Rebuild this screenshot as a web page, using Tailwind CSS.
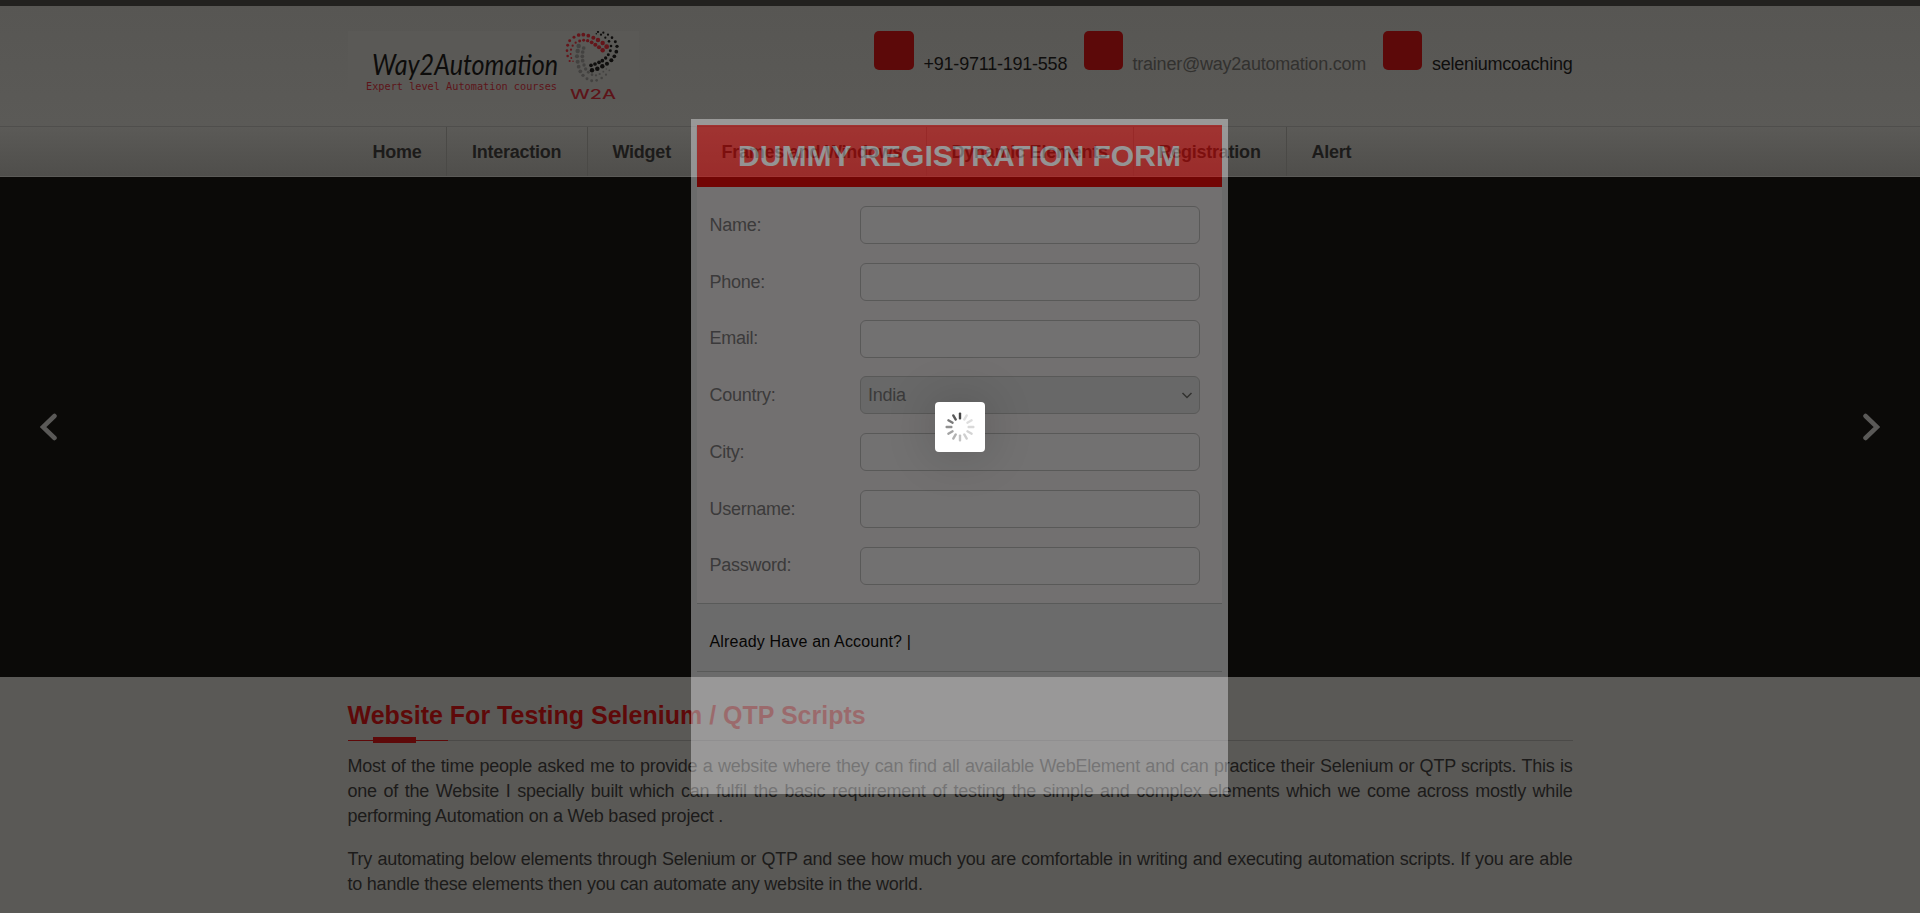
<!DOCTYPE html>
<html lang="en">
<head>
<meta charset="utf-8">
<title>Way2Automation</title>
<script src="https://cdn.jsdelivr.net/npm/@tailwindcss/browser@4"></script>
</head>
<body class="relative h-[913px] w-[1920px] overflow-hidden bg-[#5a5956] font-['Liberation_Sans',sans-serif] text-lg tracking-[-0.225px] text-[#1c1b1a]">
<header class="h-[126px] border-t-6 border-[#22211f] bg-linear-to-b from-[#575653] to-[#5b5a57]">
  <div class="mx-auto flex w-[1225px] justify-between pt-[25px]">
    <svg class="h-[70px] w-[291px] bg-[#5a5956]" viewBox="0 0 291 70">
      <text x="24" y="44" font-family="Lato" font-style="italic" font-size="28" textLength="186" lengthAdjust="spacingAndGlyphs" letter-spacing="0" fill="#0d0c0b">Way2Automation</text>
      <text x="18" y="59" font-family="DejaVu Sans Mono" font-size="10.5" textLength="191" lengthAdjust="spacingAndGlyphs" letter-spacing="0" fill="#5d1419">Expert level Automation courses</text>
      <text x="222" y="68" font-family="Inter" font-weight="500" font-size="13" textLength="46" lengthAdjust="spacingAndGlyphs" letter-spacing="0" fill="#5d1419">W2A</text>
      <g id="dots"></g>
    </svg>
    <div class="flex text-[#0f0e0d]">
      <div class="flex w-[210px]"><span class="h-[39px] w-10 rounded-[5px] bg-[#5c0909]"></span><span class="ml-2.5 pt-[19px]">+91-9711-191-558</span></div>
      <div class="flex w-[299px]"><span class="h-[39px] w-[39px] rounded-[5px] bg-[#5c0909]"></span><span class="ml-2.5 pt-[19px] text-[#32312f]">trainer@way2automation.com</span></div>
      <div class="flex w-[190px]"><span class="h-[39px] w-10 rounded-[5px] bg-[#5c0909]"></span><span class="ml-2.5 pt-[19px]">seleniumcoaching</span></div>
    </div>
  </div>
</header>
<nav class="h-[51px] border-t border-b border-t-[#4f4e4c] border-b-[#5c5b58] bg-linear-to-b from-[#5b5a57] to-[#4f4e4b]">
  <ul class="mx-auto flex h-full w-[1225px] font-bold tracking-[-0.24px] leading-[50px] *:border-r *:border-[#4a4946] *:pl-[25px]">
    <li class="w-[99.5px]">Home</li><li class="w-[140.5px]">Interaction</li><li class="w-[109px]">Widget</li><li class="w-[230px]">Frames and Windows</li><li class="w-[207px]">Dynamic Elements</li><li class="w-[153px]">Registration</li><li class="border-r-0!">Alert</li>
  </ul>
</nav>
<section class="flex h-[500px] items-center justify-between bg-[#0b0a08] px-10">
  <svg class="h-7 w-[17px]" viewBox="0 0 17 28" fill="none" stroke="#5a5957" stroke-width="4.500" stroke-linecap="round"><path d="M14.500 3L3 14L14.500 25"/></svg>
  <svg class="h-7 w-[17px]" viewBox="0 0 17 28" fill="none" stroke="#5a5957" stroke-width="4.500" stroke-linecap="round"><path d="M2.500 3L14 14L2.500 25"/></svg>
</section>
<main class="mx-auto w-[1225px] pt-[23px]">
  <h1 class="text-[25px] leading-[30px] font-bold tracking-normal text-[#5e0909]">Website For Testing Selenium / QTP Scripts</h1>
  <div class="mt-[7px] flex h-1.5 items-center"><i class="h-px w-[25px] bg-[#5e0909]"></i><i class="h-1.5 w-[43px] bg-[#5e0909]"></i><i class="h-px w-8 bg-[#5e0909]"></i><i class="h-px flex-1 bg-[#4b4a48]"></i></div>
  <p class="mt-[11px] text-justify leading-[25px]">Most of the time people asked me to provide a website where they can find all available WebElement and can practice their Selenium or QTP scripts. This is one of the Website I specially built which can fulfil the basic requirement of testing the simple and complex elements which we come across mostly while performing Automation on a Web based project .</p>
  <p class="mt-[18px] text-justify leading-[25px]">Try automating below elements through Selenium or QTP and see how much you are comfortable in writing and executing automation scripts. If you are able to handle these elements then you can automate any website in the world.</p>
</main>

<!-- Registration dialog, faded in halfway -->
<div class="absolute left-[691px] top-[119px] h-[675px] w-[537px] bg-[#eeeef2] px-1.5 pt-1.5 opacity-[.425]">
  <h2 class="h-[62px] bg-[#ff0000] text-center text-3xl leading-[61px] font-bold tracking-[0.03px] text-[#eeeef2]">DUMMY REGISTRATION FORM</h2>
  <form class="flex h-[417px] flex-col gap-[18.8px] border-b border-[#c4c8c8] bg-[#fffafd] pt-[19px] pl-[12.5px] tracking-[-0.25px] text-[#7d7d80]">
    <label class="flex h-[38px]"><span class="w-[150.5px] leading-[39px]">Name:</span><span class="w-[340px] rounded-md border border-[#c4c4c6] bg-[#fffdff]"></span></label>
    <label class="flex h-[38px]"><span class="w-[150.5px] leading-[39px]">Phone:</span><span class="w-[340px] rounded-md border border-[#c4c4c6] bg-[#fffdff]"></span></label>
    <label class="flex h-[38px]"><span class="w-[150.5px] leading-[37px]">Email:</span><span class="w-[340px] rounded-md border border-[#c4c4c6] bg-[#fffdff]"></span></label>
    <label class="flex h-[38px]"><span class="w-[150.5px] leading-[39px]">Country:</span><span class="flex w-[340px] items-center justify-between rounded-md border border-[#c4c4c6] bg-[#e6e9ea] pr-[6px] pl-[7px] leading-9">India<svg class="h-3 w-3" viewBox="0 0 12 12" fill="none" stroke="#666" stroke-width="1.5"><path d="M1.500 4L6 8.500L10.500 4"/></svg></span></label>
    <label class="flex h-[38px]"><span class="w-[150.5px] leading-[39px]">City:</span><span class="w-[340px] rounded-md border border-[#c4c4c6] bg-[#fffdff]"></span></label>
    <label class="flex h-[38px]"><span class="w-[150.5px] leading-[39px]">Username:</span><span class="w-[340px] rounded-md border border-[#c4c4c6] bg-[#fffdff]"></span></label>
    <label class="flex h-[38px]"><span class="w-[150.5px] leading-[37px]">Password:</span><span class="w-[340px] rounded-md border border-[#c4c4c6] bg-[#fffdff]"></span></label>
  </form>
  <p class="h-[68px] border-b border-[#c4c8c8] pl-[12.5px] text-base leading-[75px] tracking-[0.17px] text-black">Already Have an Account? |</p>
</div>

<div class="absolute left-[935px] top-[402px] flex h-[50px] w-[50px] items-center justify-center rounded bg-white shadow-[0_0_50px_rgba(0,0,0,0.2)]">
  <svg class="h-8 w-8" viewBox="-16 -16 32 32" id="spinner"></svg>
</div>
<script>
const dots = [
 // red arcs
 [746,105,5],[760,104,5],[775,107,5],[790,113,5.5],[804,120,6],[818,129,6],[830,140,6.5],
 [732,112,4],[719,122,4],[713,136,4],[711,152,3.5],[713,168,3.5],[719,183,3],
 [749,123,4],[761,121,4],[773,122,4.5],[785,127,5],[796,134,5.5],[807,142,5.5],[818,151,6],
 [737,128,3],[728,137,3],[723,149,3],[722,162,2.5],[724,174,2.5],[729,184,2],
 // black arcs
 [804,96,3,1],[820,98,3,1],[834,104,3,1],[846,113,3.5,1],[856,125,4,1],[861,139,4.5,1],[859,155,5,1],[853,169,5,1],[844,181,5.5,1],[831,191,5.5,1],[817,199,6,1],[802,206,6,1],[786,211,6,1],
 [799,101,2,1],[813,104,3,1],[826,113,3,1],[837,124,3.5,1],[843,138,3.5,1],[841,152,4,1],[835,164,4,1],[827,174,4.5,1],[817,182,5,1],[807,187,5,1],[795,192,5,1],[783,196,5,1],
 // grey arcs
 [746,138,6,2],[743,153,6,2],[741,169,5.5,2],[743,185,5.5,2],[746,200,5,2],[751,214,5,2],[759,226,4.5,2],[771,236,4,2],[785,242,4,2],[800,241,3.5,2],[815,234,3.5,2],[828,224,3,2],[838,211,2.5,2],
 [761,144,5,2],[758,156,5,2],[757,169,5,2],[758,182,5,2],[762,195,4.5,2],[767,207,4.5,2],[775,217,4,2],[786,224,3.5,2],[798,226,3,2],[809,222,3,2],[820,215,2.5,2],[829,207,2,2]
];
const tones = ['#64151a', '#0f0e0d', '#434240'];
document.getElementById('dots').innerHTML = dots.map(([x, y, r, c = 0]) =>
  `<circle cx="${x / 3 - 18}" cy="${y / 3 - 31}" r="${r / 2.7}" fill="${tones[c]}"/>`).join('');
document.getElementById('spinner').innerHTML = [.72,.12,.13,.15,.17,.19,.23,.3,.36,.43,.52,.65].map((o, i) =>
  `<rect x="-1.2" y="-14.5" width="2.4" height="7" rx="1" fill="#000" fill-opacity="${o}" transform="rotate(${i * 30})"/>`).join('');
</script>
</body>
</html>
